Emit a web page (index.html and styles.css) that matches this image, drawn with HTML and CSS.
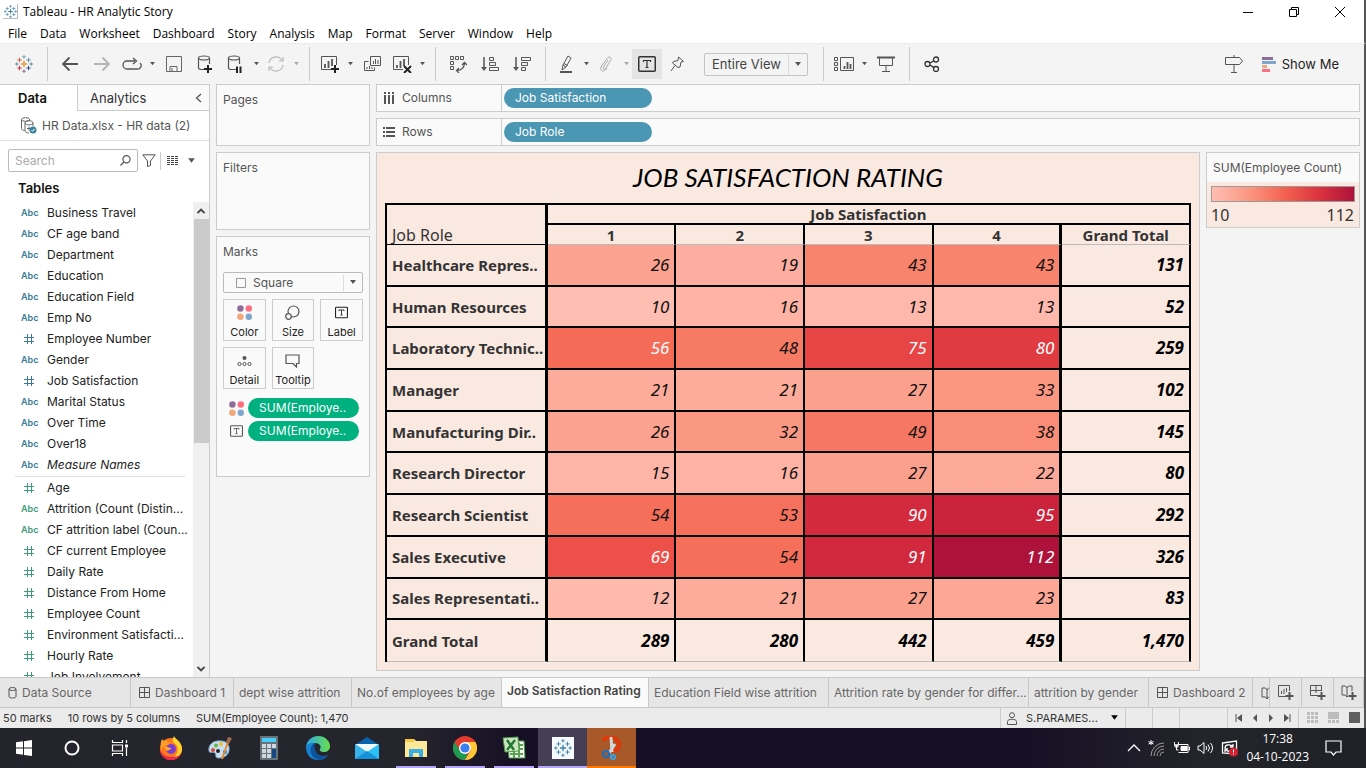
FILE: index.html
```html
<!DOCTYPE html>
<html lang="en">
<head>
<meta charset="utf-8">
<title>Tableau - HR Analytic Story</title>
<link rel="stylesheet" href="styles.css">
</head>
<body>
<svg class="defs" aria-hidden="true">
  <symbol id="plus-mark" viewBox="0 0 20 20"><path d="M10 6.5v7M6.500 10h7" stroke="#eb912c" stroke-width="1.500"/><path d="M5 3v5M2.500 5.500h5" stroke="#c8553d"/><path d="M15 3v5M12.500 5.500h5" stroke="#5c87a6"/><path d="M5 12v5M2.500 14.500h5" stroke="#c72035"/><path d="M15 12v5M12.500 14.500h5" stroke="#1f457e"/><path d="M10 0v4M8 2h4" stroke="#7099a6"/><path d="M10 16v4M8 18h4" stroke="#7b6a95"/><path d="M2 8v4M0 10h4" stroke="#5c87a6"/><path d="M18 8v4M16 10h4" stroke="#59879b"/></symbol>
  <symbol id="blue-mark" viewBox="0 0 20 20"><g stroke="#3c7fae"><path d="M10 6.500v7M6.500 10h7" stroke-width="1.500"/><path d="M5 3v5M2.500 5.500h5M15 3v5M12.500 5.500h5M5 12v5M2.500 14.500h5M15 12v5M12.500 14.500h5M10 0v4M8 2h4M10 16v4M8 18h4M2 8v4M0 10h4M18 8v4M16 10h4"/></g></symbol>
  <symbol id="caret" viewBox="0 0 8 5"><path d="M1 0h6L4 4z" fill="currentColor"/></symbol>
  <symbol id="t-box" viewBox="0 0 18 16"><rect x=".75" y=".75" width="16.500" height="14.500" rx="1" fill="none" stroke="currentColor" stroke-width="1.500"/><path d="M5.500 6V4.500h7V6M9 4.500v7M7.500 11.500h3" fill="none" stroke="currentColor" stroke-width="1.200"/></symbol>
  <symbol id="dots" viewBox="0 0 14 14"><circle cx="3.200" cy="3.200" r="3" fill="#8b6f9a"/><circle cx="11" cy="3.200" r="3" fill="#fb6f80"/><circle cx="3.200" cy="11" r="3" fill="#f3a67b"/><circle cx="11" cy="11" r="3" fill="#7fa6cf"/></symbol>
  <symbol id="window" viewBox="0 0 11 11"><path d="M.5.5h10v10H.5zM5.500.5v10M.5 5.500h10" fill="none" stroke="#555"/></symbol>
  <symbol id="book" viewBox="0 0 12 12"><path d="M6 3 4.500 1H1v9h3.500L6 12l1.500-2H11V1H7.500zM6 3v9" fill="none" stroke="#555"/></symbol>
  <symbol id="cyl" viewBox="0 0 18 18"><path d="M9.500 14.500H5c-2 0-3.500-.6-3.500-1.500V3M12.500 3v6" fill="none" stroke="#555" stroke-width="1.200"/><ellipse cx="7" cy="3" rx="5.500" ry="2" fill="none" stroke="#555" stroke-width="1.200"/></symbol>
</svg>

<header class="titlebar">
  <span class="app-icon"><svg width="13" height="13"><use href="#blue-mark"/></svg></span>
  <span>Tableau - HR Analytic Story</span>
  <div class="win-controls">
    <button aria-label="Minimize"><svg width="12" height="12"><path d="M1 6.500h10" stroke="#000"/></svg></button>
    <button aria-label="Restore"><svg width="12" height="12" fill="none" stroke="#000"><path d="M1.500 3.500h7v7h-7zM3.500 3V1.500h7v7H9"/></svg></button>
    <button aria-label="Close"><svg width="12" height="12" fill="none" stroke="#000"><path d="m1 1 10 10M11 1 1 11"/></svg></button>
  </div>
</header>
<nav class="menubar">
  <button>File</button><button>Data</button><button>Worksheet</button><button>Dashboard</button><button>Story</button><button>Analysis</button><button>Map</button><button>Format</button><button>Server</button><button>Window</button><button>Help</button>
</nav>

<div class="app">
<div class="toolbar">
  <button class="tb-logo" aria-label="Start page"><svg width="18" height="18"><use href="#plus-mark"/></svg></button>
  <i class="sep"></i>
  <button class="tb" aria-label="Undo"><svg width="18" height="16" fill="none" stroke="#555" stroke-width="1.800"><path d="M17 8H2M8.500 1.500 2 8l6.500 6.500"/></svg></button>
  <button class="tb" aria-label="Redo"><svg width="18" height="16" fill="none" stroke="#b5b5b5" stroke-width="1.800"><path d="M1 8h15M9.500 1.500 16 8l-6.500 6.500"/></svg></button>
  <button class="tb tight" aria-label="Replay"><svg width="20" height="14" fill="none" stroke="#555" stroke-width="1.300"><path d="M13 4H5a3.500 3.500 0 0 0 0 8h10a3.500 3.500 0 0 0 3-6M11 1l3.500 3-3.500 3"/></svg></button>
  <button class="tb caret" aria-label="Replay options"><svg width="7" height="4"><use href="#caret"/></svg></button>
  <button class="tb" aria-label="Save"><svg width="16" height="16" fill="none" stroke="#666"><path d="M.5.5h15v15H.5zM4 15v-4.500h7V15M6 12v3"/></svg></button>
  <button class="tb" aria-label="New data source"><svg width="18" height="18"><use href="#cyl"/><path d="M11 10v8M7 14h8" stroke="#222" stroke-width="2"/></svg></button>
  <button class="tb tight" aria-label="Pause updates"><svg width="18" height="18"><use href="#cyl"/><path d="M10 11.500V18M13.500 11.500V18" stroke="#222" stroke-width="2"/></svg></button>
  <button class="tb caret" aria-label="Pause options"><svg width="7" height="4"><use href="#caret"/></svg></button>
  <button class="tb tight" aria-label="Refresh"><svg width="18" height="16" fill="none" stroke="#bbb" stroke-width="1.200"><path d="M2 7a7 7 0 0 1 13-2.500M16 1v4h-4M16 9A7 7 0 0 1 3 11.500M2 15v-4h4"/></svg></button>
  <button class="tb caret dim" aria-label="Refresh options"><svg width="7" height="4"><use href="#caret"/></svg></button>
  <i class="sep"></i>
  <button class="tb tight" aria-label="New worksheet"><svg width="20" height="18" fill="none" stroke="#555"><path d="M11 14.500H1.500V1.500h15V10"/><path d="M5 13V9M8.500 13V6M12 11V4" stroke-width="1.800"/><path d="M15 10v8M11 14h8" stroke="#222" stroke-width="2"/></svg></button>
  <button class="tb caret" aria-label="New worksheet options"><svg width="7" height="4"><use href="#caret"/></svg></button>
  <button class="tb" aria-label="Duplicate"><svg width="18" height="18" fill="none" stroke="#555"><path d="M7.500 1.500h10v9h-10zM5.500 6.500h-4v9h10v-3M4 14v-2M6.500 14v-3M9 14v-2M10.500 9V6M12.500 9V4M15 9V5"/></svg></button>
  <button class="tb tight" aria-label="Clear sheet"><svg width="20" height="18" fill="none" stroke="#555"><path d="M11 14.500H1.500V1.500h15V10"/><path d="M5 13v-3M8.500 13V6M12 11V4" stroke-width="1.800"/><path d="m12 11 7 7M19 11l-7 7" stroke="#222" stroke-width="2"/></svg></button>
  <button class="tb caret" aria-label="Clear options"><svg width="7" height="4"><use href="#caret"/></svg></button>
  <i class="sep"></i>
  <button class="tb" aria-label="Swap rows and columns"><svg width="18" height="18" fill="none" stroke="#555"><path d="M1.500 1.500h3v3h-3zM6.500 1.500h3v3h-3zM11.500 1.500h3v3h-3zM1.500 6.500h3v3h-3zM1.500 11.500h3v3h-3z"/><path d="M8 15.500c5 0 7-3 7.500-7M13 10l2.500-2.500L18 10M10 13l-2.500 2.500L10 18" stroke-width="1.300"/></svg></button>
  <button class="tb" aria-label="Sort ascending"><svg width="18" height="16" fill="none" stroke="#555"><path d="M3 1v12" stroke-width="1.500"/><path d="M0 11h6l-3 4z" fill="#555" stroke="none"/><path d="M8.500 1.500h4v3h-4zM8.500 6.500h6v3h-6zM8.500 11.500h9v3h-9z"/></svg></button>
  <button class="tb" aria-label="Sort descending"><svg width="18" height="16" fill="none" stroke="#555"><path d="M3 1v12" stroke-width="1.500"/><path d="M0 11h6l-3 4z" fill="#555" stroke="none"/><path d="M8.500 1.500h9v3h-9zM8.500 6.500h6v3h-6zM8.500 11.500h4v3h-4z"/></svg></button>
  <i class="sep"></i>
  <button class="tb tight" aria-label="Highlight"><svg width="14" height="18" fill="none" stroke="#555"><path d="m4 10 5-9 3 2-5 9zM4 10l-1 5 4-3M5 8.500l3.500 2"/><path d="M1 17h12" stroke-width="2"/></svg></button>
  <button class="tb caret" aria-label="Highlight options"><svg width="7" height="4"><use href="#caret"/></svg></button>
  <button class="tb tight" aria-label="Group"><svg width="14" height="16" fill="none" stroke="#aaa"><path d="m9 4-4.500 7c-1 2 1 3 2 1.500l5-8c2-3-1.500-5-3.500-2L2.500 10C1 13 2 15 4 15s3-1.500 4-3"/></svg></button>
  <button class="tb caret dim" aria-label="Group options"><svg width="7" height="4"><use href="#caret"/></svg></button>
  <button class="tb text-on" aria-label="Show mark labels" aria-pressed="true"><svg width="18" height="16"><use href="#t-box"/></svg></button>
  <button class="tb mid" aria-label="Fix axes"><svg width="16" height="16" fill="none" stroke="#555"><path d="m9.500 1 5 4.500-2.500.5-1 5-2 .5L3.500 7l1-1.500L9 4.500zM6 9.500 2 15"/></svg></button>
  <div class="fit"><select aria-label="Fit"><option>Entire View</option></select><svg width="8" height="5"><use href="#caret"/></svg></div>
  <i class="sep"></i>
  <button class="tb tight" aria-label="Show cards"><svg width="20" height="16" fill="none" stroke="#555"><path d="M.5 1.500h3v3h-3zM.5 6.500h3v3h-3zM.5 11.500h3v3h-3zM6.500 1.500h13v13h-13z"/><path d="M10.500 13v-3M13.500 13V6M16.500 13V8" stroke-width="1.800"/></svg></button>
  <button class="tb caret" aria-label="Card options"><svg width="7" height="4"><use href="#caret"/></svg></button>
  <button class="tb" aria-label="Presentation mode"><svg width="18" height="16" fill="none" stroke="#555"><path d="M0 1.500h18" stroke-width="2"/><path d="M2.500 2v7.500h13V2M9 10v5M5 15.500h8"/></svg></button>
  <i class="sep"></i>
  <button class="tb" aria-label="Share"><svg width="16" height="16" fill="none" stroke="#333" stroke-width="1.300"><circle cx="3.500" cy="8" r="2.500"/><circle cx="12" cy="3.500" r="2.500"/><circle cx="12" cy="13" r="2.500"/><path d="m6 7 4-2.300M6 9l4 2.600"/></svg></button>
  <button class="tb signpost" aria-label="Guide"><svg width="20" height="18" fill="none" stroke="#555"><path d="M1.500 2.500h14l3 3.500-3 3.500h-14zM10 0v2.500M10 9.500v8M7 17.500h6"/></svg></button>
  <button class="showme"><svg width="14" height="15"><path d="M0 0h11v3H0z" fill="#8b6f9a"/><path d="M0 4h14v3H0z" fill="#7fa6cf"/><path d="M0 8h5v3H0z" fill="#f3a67b"/><path d="M0 12h8v3H0z" fill="#fb6f80"/></svg>Show Me</button>
</div>

<div class="workspace">
  <aside class="data-pane">
    <div class="pane-tabs"><button class="on">Data</button><button>Analytics<svg width="7" height="10" fill="none" stroke="#555" stroke-width="1.300"><path d="M6 1 1.500 5 6 9"/></svg></button></div>
    <div class="source"><svg width="17" height="17" fill="none" stroke="#666"><path d="M1.500 2.500v9c0 1 1 2 3 2M9.500 2V4"/><ellipse cx="5.500" cy="2.500" rx="4" ry="1.800"/><path d="M5 6v8c0 1 2 2 4 2M5 6c0-3 8-3 8 0v3M5 6c0 2.500 8 2.500 8 0"/><path d="M7 11.500h4M9 9.500v4"/><circle cx="13" cy="13" r="3.500" fill="#3b829e" stroke="none"/><path d="m11.500 13 1.200 1.200 2-2.400" stroke="#fff"/></svg>HR Data.xlsx - HR data (2)</div>
    <div class="search-row">
      <div class="search"><input type="text" placeholder="Search" aria-label="Search"><svg width="11" height="11" fill="none" stroke="#555" stroke-width="1.200"><circle cx="6.500" cy="4.200" r="3.600"/><path d="M4 7 .5 10.500"/></svg></div>
      <button aria-label="Filter fields"><svg width="14" height="13" fill="none" stroke="#555"><path d="M.8.8h12.400L8.500 7v4.500l-3 1V7z"/></svg></button>
      <i></i>
      <button aria-label="View"><svg width="12" height="10" stroke="#444" stroke-dasharray="3 1"><path d="M0 .5h12M0 2.500h12M0 4.500h12M0 6.500h12M0 8.500h12"/></svg></button>
      <button aria-label="View options"><svg width="9" height="6"><use href="#caret"/></svg></button>
    </div>
    <h2>Tables</h2>
    <div class="fields">
      <ul>
        <li><b>Abc</b>Business Travel</li><li><b>Abc</b>CF age band</li><li><b>Abc</b>Department</li><li><b>Abc</b>Education</li><li><b>Abc</b>Education Field</li><li><b>Abc</b>Emp No</li><li><b class="num"></b>Employee Number</li><li><b>Abc</b>Gender</li><li><b class="num"></b>Job Satisfaction</li><li><b>Abc</b>Marital Status</li><li><b>Abc</b>Over Time</li><li><b>Abc</b>Over18</li><li><b>Abc</b><em>Measure Names</em></li>
      </ul>
      <ul class="measures">
        <li><b class="num"></b>Age</li><li><b>Abc</b>Attrition (Count (Distin...</li><li><b>Abc</b>CF attrition label (Coun...</li><li><b class="num"></b>CF current Employee</li><li><b class="num"></b>Daily Rate</li><li><b class="num"></b>Distance From Home</li><li><b class="num"></b>Employee Count</li><li><b class="num"></b>Environment Satisfacti...</li><li><b class="num"></b>Hourly Rate</li><li><b class="num"></b>Job Involvement</li>
      </ul>
      <div class="scroll"><svg width="8" height="6" fill="none" stroke="#444" stroke-width="1.800"><path d="M.5 5 4 1.500 7.500 5"/></svg><i></i><svg width="8" height="6" fill="none" stroke="#444" stroke-width="1.800"><path d="M.5 1 4 4.500 7.500 1"/></svg></div>
    </div>
  </aside>

  <section class="cards">
    <div class="card pages">Pages</div>
    <div class="card filters">Filters</div>
    <div class="card marks">
      Marks
      <div class="mark-type"><svg width="10" height="10" fill="none" stroke="#999"><path d="M.5.500h9v9h-9z"/></svg><select aria-label="Mark type"><option>Square</option></select><svg class="arrow" width="8" height="5"><use href="#caret"/></svg></div>
      <div class="shelf">
        <button><svg width="15" height="15"><use href="#dots"/></svg>Color</button>
        <button><svg width="15" height="15" fill="none" stroke="#555" stroke-width="1.200"><circle cx="8.500" cy="6.500" r="5.500"/><circle cx="3.500" cy="11.500" r="2.800" fill="#fafafa"/></svg>Size</button>
        <button><svg width="13" height="15"><use href="#t-box"/></svg>Label</button>
        <button><svg width="15" height="15" fill="none" stroke="#555"><circle cx="7.500" cy="5" r="2" fill="#555" stroke="none"/><circle cx="2.500" cy="11" r="1.600"/><circle cx="7.500" cy="11" r="1.600"/><circle cx="12.500" cy="11" r="1.600"/></svg>Detail</button>
        <button><svg width="15" height="15" fill="none" stroke="#555" stroke-width="1.200"><path d="M1 2h13v8.500h-2.500v3.500L8 10.500H1z"/></svg>Tooltip</button>
      </div>
      <div class="assigned"><svg width="15" height="15"><use href="#dots"/></svg><button class="pill green">SUM(Employe..</button></div>
      <div class="assigned"><svg width="13" height="12"><use href="#t-box"/></svg><button class="pill green">SUM(Employe..</button></div>
    </div>
  </section>

  <main class="content">
    <div class="axis"><span><svg width="12" height="12" stroke="#555" stroke-width="2"><path d="M2 3v9M6 3v9M10 3v9M2 0v2M6 0v2M10 0v2"/></svg>Columns</span><button class="pill">Job Satisfaction</button></div>
    <div class="axis"><span><svg width="12" height="12" stroke="#555" stroke-width="2"><path d="M3 2h9M3 6h9M3 10h9M0 2h2M0 6h2M0 10h2"/></svg>Rows</span><button class="pill">Job Role</button></div>
    <div class="view-row">
      <section class="sheet">
        <h1>JOB SATISFACTION RATING</h1>
        <div class="grid">
        <table>
          <colgroup><col class="role-col"><col><col><col><col><col></colgroup>
          <thead>
            <tr><th rowspan="2" class="corner">Job Role</th><th colspan="5" class="top">Job Satisfaction</th></tr>
            <tr class="sub"><th>1</th><th>2</th><th>3</th><th>4</th><th>Grand Total</th></tr>
          </thead>
          <tbody>
            <tr><th>Healthcare Repres..</th><td style="background:#fca290">26</td><td style="background:#fdaea0">19</td><td style="background:#f9846d">43</td><td style="background:#f9846d">43</td><td>131</td></tr>
            <tr><th>Human Resources</th><td style="background:#ffbeb2">10</td><td style="background:#feb3a5">16</td><td style="background:#ffb8ab">13</td><td style="background:#ffb8ab">13</td><td>52</td></tr>
            <tr><th>Laboratory Technic..</th><td class="lt" style="background:#f46b58">56</td><td style="background:#f77a65">48</td><td class="lt" style="background:#e64445">75</td><td class="lt" style="background:#e13b42">80</td><td>259</td></tr>
            <tr><th>Manager</th><td style="background:#fdab9b">21</td><td style="background:#fdab9b">21</td><td style="background:#fca08e">27</td><td style="background:#fb9681">33</td><td>102</td></tr>
            <tr><th>Manufacturing Dir..</th><td style="background:#fca290">26</td><td style="background:#fb9883">32</td><td style="background:#f67864">49</td><td style="background:#fa8d77">38</td><td>145</td></tr>
            <tr><th>Research Director</th><td style="background:#feb5a7">15</td><td style="background:#feb3a5">16</td><td style="background:#fca08e">27</td><td style="background:#fda999">22</td><td>80</td></tr>
            <tr><th>Research Scientist</th><td style="background:#f56f5b">54</td><td style="background:#f5715d">53</td><td class="lt" style="background:#d42a3d">90</td><td class="lt" style="background:#cc233c">95</td><td>292</td></tr>
            <tr><th>Sales Executive</th><td class="lt" style="background:#ec5049">69</td><td style="background:#f56f5b">54</td><td class="lt" style="background:#d2283d">91</td><td class="lt" style="background:#ae123a">112</td><td>326</td></tr>
            <tr><th>Sales Representati..</th><td style="background:#ffbaae">12</td><td style="background:#fdab9b">21</td><td style="background:#fca08e">27</td><td style="background:#fda797">23</td><td>83</td></tr>
            <tr class="total"><th>Grand Total</th><td>289</td><td>280</td><td>442</td><td>459</td><td>1,470</td></tr>
          </tbody>
        </table>
        </div>
      </section>
      <aside class="legend"><h3>SUM(Employee Count)</h3><div class="ramp"></div><div class="ends"><span>10</span><span>112</span></div></aside>
    </div>
  </main>
</div>

<nav class="sheet-tabs">
  <button><svg width="9" height="12" fill="none" stroke="#555"><ellipse cx="4.500" cy="2" rx="3.500" ry="1.500"/><path d="M1 2v7.500c0 2 7 2 7 0V2"/></svg>Data Source</button>
  <button><svg width="11" height="11"><use href="#window"/></svg>Dashboard 1</button>
  <button>dept wise attrition</button>
  <button>No.of employees by age</button>
  <button class="on">Job Satisfaction Rating</button>
  <button>Education Field wise attrition</button>
  <button>Attrition rate by gender for differ...</button>
  <button>attrition by gender</button>
  <button><svg width="11" height="11"><use href="#window"/></svg>Dashboard 2</button>
  <button aria-label="Story"><svg width="12" height="12"><use href="#book"/></svg></button>
  <button class="new" aria-label="New worksheet"><svg width="16" height="15" fill="none" stroke="#555"><path d="M8 11.500H.5V.5h11V6M3.500 9V6M6 9V4M8.500 7V3"/><path d="M11.500 7v8M7.500 11h8" stroke-width="2"/></svg></button>
  <button class="new" aria-label="New dashboard"><svg width="16" height="15" fill="none" stroke="#555"><path d="M8 10.500H.5V.5h11V6M6 .5V8M.5 5.500h11"/><path d="M11.500 7v8M7.500 11h8" stroke-width="2"/></svg></button>
  <button class="new" aria-label="New story"><svg width="16" height="15" fill="none" stroke="#555"><path d="M6 3 4.500 1H1v9h3l2 2 1-1M6 3v9M6 3l1.500-2H11v5"/><path d="M11.500 7v8M7.500 11h8" stroke-width="2"/></svg></button>
</nav>
<footer class="status">
  <span>50 marks</span><span>10 rows by 5 columns</span><span>SUM(Employee Count): 1,470</span>
  <button class="user"><svg width="10" height="13" fill="none" stroke="#555"><circle cx="5" cy="3.200" r="2.500"/><path d="M.5 12.500V9.500c0-3 9-3 9 0v3z"/></svg>S.PARAMES...<svg width="9" height="6"><use href="#caret"/></svg></button>
  <i></i><i></i><i class="wide"></i>
  <div class="pager"><button aria-label="First"><svg width="8" height="8"><path d="M1 0v8M2 0" stroke="#555"/><path d="M7 0v8L2 4z" fill="#555"/></svg></button><button aria-label="Previous"><svg width="8" height="8"><path d="M6 0v8L2 4z" fill="#555"/></svg></button><button aria-label="Next"><svg width="8" height="8"><path d="M2 0v8l4-4z" fill="#555"/></svg></button><button aria-label="Last"><svg width="8" height="8"><path d="M7 0v8" stroke="#555"/><path d="M1 0v8l5-4z" fill="#555"/></svg></button></div>
  <div class="views"><button aria-label="Sheet sorter"><svg width="12" height="12" fill="#bdbdbd"><path d="M0 0h3v3H0zM4 0h3v3H4zM8 0h3v3H8zM0 4h3v3H0zM4 4h3v3H4zM8 4h3v3H8zM0 8h3v3H0zM4 8h3v3H4zM8 8h3v3H8z"/></svg></button><button aria-label="Filmstrip"><svg width="12" height="12" fill="#bdbdbd"><path d="M0 0h11v7H0zM0 8h3v3H0zM4 8h3v3H4zM8 8h3v3H8z"/></svg></button><button aria-label="Tabs"><svg width="12" height="12"><path d="M0 0h11v11H0z" fill="#5f5f5f"/></svg></button></div>
</footer>
</div>

<div class="taskbar">
  <button class="sys" aria-label="Start"><svg width="16" height="16" fill="#fff"><path d="m0 2.300 7-1v6.300H0zM8 1.200 16 0v7.600H8zM0 8.500h7v6.300l-7-1zM8 8.500h8V16l-8-1.100z"/></svg></button>
  <button class="sys" aria-label="Search"><svg width="16" height="16" fill="none" stroke="#fff" stroke-width="2"><circle cx="8" cy="8" r="6.500"/></svg></button>
  <button class="sys" aria-label="Task view"><svg width="18" height="16" fill="none" stroke="#fff" stroke-width="1.200"><path d="M1.500 0v2.500h10V0M1.500 5h10v6h-10zM1.500 16v-2.500h10V16M15.500 0v3M15.500 8v8"/><path d="M14 4.500h3v3h-3z" fill="#fff" stroke="none"/></svg></button>
  <button aria-label="Firefox"><svg width="24" height="24"><circle cx="12" cy="13" r="11" fill="#ff7a1c"/><path d="M12 24C5 24 1 19 1 13c2 6 6 8 11 8s9-3 11-10c1 8-4 13-11 13z" fill="#f5264d"/><path d="M15 0c1 3 8 6 8 13 0 5-4 8-8 8 5-4 5-11 0-14-2-2-1-5 0-7z" fill="#ffd52e"/><path d="M3 3c1 2 3 2 5 2l3 3-5 2-4 3C1 8 2 5 3 3z" fill="#ff9d27"/><circle cx="12" cy="13" r="5" fill="#7a3fd0"/><path d="M5 11c4-1 5 1 7 1 0 2-3 2-4 3z" fill="#ffab25"/></svg></button>
  <button aria-label="Paint"><svg width="24" height="24"><path d="M13 5C5 4 0 9 1 15c1 3 4 0 6 2s-1 5 4 5c7 0 11-5 10-11-1-4-4-6-8-6z" fill="#c9dff0" stroke="#7fa7c5"/><circle cx="5" cy="14" r="2" fill="#d94a36"/><circle cx="8" cy="9.500" r="2" fill="#62b546"/><circle cx="13" cy="8" r="2" fill="#f1bf2f"/><circle cx="17" cy="16" r="2.200" fill="#3692d8"/><circle cx="10" cy="15" r="2" fill="#23232c"/><path d="m20 6-6 17" stroke="#e58b2f" stroke-width="2"/><path d="m18 6 2-5 4 1-3 6z" fill="#9b6b4d"/></svg></button>
  <button aria-label="Calculator"><svg width="18" height="24"><rect width="18" height="24" rx="1" fill="#67737c"/><path d="M2 2h14v4H2z" fill="#47cdf8"/><path d="M2 8h4v4H2zM7 8h4v4H7zM12 8h4v4h-4zM2 13h4v4H2zM7 13h4v4H7zM2 18h4v4H2zM7 18h4v4H7z" fill="#d0d8de"/><path d="M12 13h4v9h-4z" fill="#174780"/></svg></button>
  <button aria-label="Edge"><svg width="24" height="24"><defs><linearGradient id="eg"><stop offset="0" stop-color="#2aa8ea"/><stop offset="1" stop-color="#6be04c"/></linearGradient></defs><path d="M0 11C1 4 6 0 12 0c7 0 12 5 12 10 0 4-3 6-6 6-3 0-5-1-4-3 2-3-1-6-5-6S2 8 0 11z" fill="url(#eg)"/><path d="M0 11c2-4 6-4 9-4-4 2-4 8-1 11 3 4 9 4 14 1-6 9-22 6-22-8z" fill="#1683d5"/><path d="M9 7c-7 3-6 14 3 17 5 0 8-2 10-5-8 3-15-2-13-12z" fill="#0d539e"/></svg></button>
  <button aria-label="Mail"><svg width="24" height="24"><path d="M0 9 12 1l12 8H0z" fill="#0863ad"/><path d="M1 8h22v10H1z" fill="#f1f7fb"/><path d="m0 8 12 8L24 8v15H0z" fill="#2cc0f4"/><path d="m0 8 12 8-12 7z" fill="#39b4eb"/><path d="m0 23 12-8 12 8z" fill="#1592da"/></svg></button>
  <button class="open" aria-label="File Explorer"><svg width="24" height="22"><path d="M1 2h9l2 2h11v16H1z" fill="#ffe79a"/><path d="M1 2h9v3H1z" fill="#f7c945"/><path d="M5 12h14v8h-4v-4H9v4H5z" fill="#38aee5"/></svg></button>
  <button class="open" aria-label="Chrome"><svg width="24" height="24"><circle cx="12" cy="12" r="12" fill="#e33b2e"/><path d="M12 24A12 12 0 0 1 1.600 6l6 10 7 2.500z" fill="#1e9b52"/><path d="M12 24a12 12 0 0 0 10.400-18H12l6 8z" fill="#fcc934"/><circle cx="12" cy="12" r="6" fill="#fff"/><circle cx="12" cy="12" r="4.600" fill="#3a7ff0"/></svg></button>
  <button class="open" aria-label="Excel"><svg width="24" height="24"><path d="M6 5h16l1 17H7z" fill="#f7fbf5" stroke="#4c9b45"/><path d="M14 9h7M14 13h7M8 18h13M12 15v7M17 7v14" stroke="#56a34d" stroke-width="2"/><path d="m1 2 15-1 1 14-14 1z" fill="#cfe6c3" stroke="#4c9b45"/><path d="m5 4 7 10M13 4 5 14" stroke="#237a30" stroke-width="2.500"/></svg></button>
  <button class="open tableau" aria-label="Tableau"><svg width="22" height="22"><path d="M0 0h22v22H0z" fill="#f8fbfd"/><use href="#blue-mark" x="2" y="2" width="18" height="18"/></svg></button>
  <button class="open snip" aria-label="Snip"><svg width="22" height="24" fill="none"><path d="M2 4c7-5 16-2 16 5 0 4-3 6-7 6" stroke="#df3909" stroke-width="4"/><path d="m10 1 1 15M14 8l-6 9" stroke="#d3d6dc" stroke-width="3"/><circle cx="5" cy="18" r="3" stroke="#176fc1" stroke-width="2"/><circle cx="12" cy="21" r="2" stroke="#2ba9ef" stroke-width="2"/></svg></button>
  <div class="tray">
    <svg width="14" height="8" fill="none" stroke="#fff" stroke-width="1.300"><path d="m1 7 6-6 6 6"/></svg>
    <svg width="18" height="18" fill="none" stroke="#999"><path d="M3 17A13 13 0 0 1 16 4M6 17A10 10 0 0 1 16 7M9 17a7 7 0 0 1 7-7M12 17a4 4 0 0 1 4-4"/><path d="M3 1v5M.5 2.500l5 2.500M5.500 2.500 .5 5" stroke="#fff"/></svg>
    <svg width="17" height="14" fill="none" stroke="#fff"><path d="M6 3.500h9v8H5.500M15.500 6h1v3h-1"/><path d="M8 5.500h6v4H8z" fill="#fff"/><path d="M1.500 1v3h4V1M3.500 4v5M2 4h3v2H2zM3.500 9h2"/></svg>
    <svg width="17" height="14" fill="none" stroke="#fff"><path d="M1 5v4h2l4 3.500v-11L3 5zM9 5q1.500 2 0 4M11 3.500q3 3.500 0 7M13.500 2q4 5 0 10"/></svg>
    <svg width="18" height="17" fill="none" stroke="#fff"><path d="m1.500 3 14-2v13l-14-1zM4 8c0-4 6-4 8-1M12 4v3H9M4 12V9h3M5 10c2 2 4 1 5 0" stroke-width="1.300"/><circle cx="12.500" cy="12" r="4.500" fill="#d81f2e" stroke="none"/><path d="M12.500 9.500v3M12.500 13.500v1"/></svg>
    <div class="clock"><span>17:38</span><span>04-10-2023</span></div>
    <svg width="17" height="16" fill="none" stroke="#fff" stroke-width="1.200"><path d="M1 1h15v11h-5l-2.500 3L6 12H1z"/></svg>
  </div>
</div>
</body>
</html>
```

FILE: styles.css
```css
* { box-sizing: border-box; }
body {
  margin: 0; height: 100vh; display: flex; flex-direction: column; overflow: hidden;
  font-family: Inter, "Liberation Sans", sans-serif; font-size: 12px; line-height: 16px; color: #333; background: #fff;
}
button { margin: 0; padding: 0; border: 0; background: none; font: inherit; color: inherit; display: flex; align-items: center; }
svg { flex: none; display: block; }
ul, h1, h2, h3 { margin: 0; padding: 0; }
.defs { position: absolute; width: 0; height: 0; }

.titlebar, .menubar, .clock { font-family: "Open Sans", "Noto Sans", sans-serif; color: #000; }
.titlebar, .menubar, .app { border-right: 2px solid #555; }
.titlebar { display: flex; align-items: center; height: 23px; flex: none; padding: 0 1px 0 3px; gap: 5px; }
.app-icon { width: 15px; height: 15px; display: flex; align-items: center; justify-content: center; border-right: 1px solid #bbb; border-bottom: 1px solid #bbb; }
.win-controls { margin-left: auto; display: flex; }
.win-controls button { width: 46px; height: 22px; justify-content: center; }
.menubar { display: flex; height: 20px; flex: none; padding: 2px 0 0 8px; gap: 13px; }

.app { flex: 1; min-height: 0; display: flex; flex-direction: column; background: #f4f4f4; border-top: 1px solid #ececec; }

.toolbar { display: flex; align-items: center; height: 40px; flex: none; color: #555; }
.tb-logo { width: 40px; padding-left: 7px; justify-content: center; }
.sep { width: 1px; height: 34px; background: #ccc; margin: 0 6px 0 7px; flex: none; }
.tb { width: 32px; height: 30px; justify-content: center; flex: none; }
.tb.tight { width: 28px; }
.tb.mid, .tb.text-on { width: 30px; }
.tb.caret { width: 12px; }
.tb.dim { color: #aaa; }
.tb.text-on { background: #e4e4e4; color: #333; }
.fit { display: flex; align-items: center; width: 104px; height: 23px; margin: 0 8px 0 12px; border: 1px solid #c4c4c4; border-radius: 2px; flex: none; }
.fit select { appearance: none; width: 84px; height: 21px; padding: 0 0 0 7px; border: 0; border-right: 1px solid #ddd; background: none; font: inherit; font-size: 13px; color: #444; }
.fit svg { margin: 0 auto; }
.signpost { margin-left: auto; }
.showme { gap: 6px; margin: 0 25px 0 12px; font-size: 13px; color: #222; }

.workspace { flex: 1; min-height: 0; display: flex; gap: 6px; }
.data-pane { width: 210px; flex: none; display: flex; flex-direction: column; background: #fff; border-top: 1px solid #ccc; border-right: 1px solid #ccc; overflow: hidden; }
.pane-tabs { display: flex; height: 26px; flex: none; font-size: 13px; }
.pane-tabs button { flex: 1; padding: 0 7px 0 12px; justify-content: space-between; border-left: 1px solid #ccc; border-bottom: 1px solid #ccc; background: #fafafa; }
.pane-tabs .on { flex: none; width: 77px; padding-left: 18px; border: 0; background: #fff; font-weight: 600; color: #111; }
.source { display: flex; align-items: center; gap: 5px; height: 30px; flex: none; padding-left: 20px; border-bottom: 1px solid #ddd; color: #555; }
.search-row { display: flex; align-items: center; gap: 4px; padding: 8px; flex: none; color: #555; }
.search { display: flex; align-items: center; width: 130px; height: 23px; padding: 0 6px; border: 1px solid #bbb; border-radius: 2px; }
.search input { flex: 1; min-width: 0; padding: 0; border: 0; outline: 0; font: inherit; }
.search input::placeholder { color: #aaa; opacity: 1; }
.search-row > i { width: 1px; height: 18px; background: #ccc; }
.search-row button:nth-of-type(2) { margin: 0 4px 0 2px; }
.data-pane h2 { height: 22px; flex: none; padding-left: 18px; font-size: 13px; line-height: 17px; font-weight: 600; color: #111; }
.fields { flex: 1; min-height: 0; position: relative; overflow: hidden; }
.fields ul { list-style: none; }
.fields li { display: flex; align-items: center; height: 21px; color: #222; white-space: nowrap; }
.fields b { width: 17px; margin: 0 9px 0 21px; font-size: 9px; font-weight: 600; color: #3b7c96; }
.fields b.num::before { content: ""; display: block; width: 10px; height: 10px; margin-left: 3px;
  background: linear-gradient(currentColor, currentColor) 3px 0 / 1px 10px no-repeat, linear-gradient(currentColor, currentColor) 7px 0 / 1px 10px no-repeat, linear-gradient(currentColor, currentColor) 0 3px / 10px 1px no-repeat, linear-gradient(currentColor, currentColor) 0 7px / 10px 1px no-repeat; }
.fields .measures { margin: 1px 0 0; }
.measures::before { content: ""; display: block; height: 1px; margin: 0 24px 0 15px; background: #ddd; }
.fields .measures b { color: #3f9c78; }
.scroll { position: absolute; right: 0; top: 0; bottom: 0; width: 16px; padding: 6px 0 5px; display: flex; flex-direction: column; align-items: center; justify-content: space-between; background: #f0f0f0; }
.scroll i { width: 15px; height: 224px; margin: 5px 0 auto; background: #cbcbcb; }

.cards { width: 154px; flex: none; display: flex; flex-direction: column; gap: 6px; color: #555; }
.card { padding: 7px 6px; border: 1px solid #ccc; background: #fafafa; }
.pages { height: 62px; }
.filters { height: 78px; }
.marks { height: 241px; }
.mark-type { display: flex; align-items: center; height: 21px; margin: 12px 0 6px; padding-left: 12px; border: 1px solid #bbb; border-radius: 2px; }
.mark-type select { appearance: none; flex: 1; padding: 0 0 0 7px; border: 0; border-right: 1px solid #ddd; background: none; font: inherit; color: #555; }
.mark-type .arrow { margin: 0 5px; }
.shelf { display: grid; grid-template-columns: repeat(3, 1fr); gap: 6px; margin-bottom: 9px; font-size: 11px; color: #222; }
.shelf button { height: 42px; padding: 5px 0 0; flex-direction: column; gap: 5px; border: 1px solid #ccc; line-height: 14px; }
.assigned { display: grid; grid-template-columns: 13px 1fr; justify-items: center; align-items: center; gap: 5px; height: 20px; margin: 0 4px 3px 7px; }
.pill { width: 148px; height: 20px; padding: 0 11px; border-radius: 10px; background: #4a96b3; color: #fff; white-space: nowrap; }
.pill.green { width: 100%; background: #00b180; }

.content { flex: 1; min-width: 0; display: flex; flex-direction: column; gap: 6px; padding: 0 4px 6px 0; }
.axis { display: flex; align-items: center; height: 28px; flex: none; border: 1px solid #ccc; background: #fafafa; color: #555; }
.axis span { width: 125px; height: 26px; margin-right: 2px; padding-left: 6px; display: flex; align-items: center; gap: 7px; border-right: 1px solid #ccc; }
.view-row { flex: 1; min-height: 0; display: flex; align-items: flex-start; gap: 6px; }
.sheet { flex: 1; height: 100%; display: flex; flex-direction: column; padding: 0 8px; border: 1px solid #ccc; background: #fae9e1; }
.sheet h1 { height: 50px; flex: none; font-family: Lato, sans-serif; font-size: 26px; line-height: 48px; font-weight: 400; font-style: italic; text-align: center; color: #000; }
.grid { flex: 1; min-height: 0; padding-bottom: 8px; }
table { width: 100%; height: 100%; table-layout: fixed; border-collapse: separate; border-spacing: 0; border: 2px solid #000; border-width: 2px 0 0 2px; font-family: "Noto Sans", sans-serif; font-size: 15px; line-height: 18px; }
.role-col { width: 20%; }
th, td { padding: 0 5px; border: 0 solid #000; border-width: 0 2px 2px 0; white-space: nowrap; overflow: hidden; }
th { font-weight: 700; color: #333; }
thead th { height: 20px; padding: 0; text-align: center; }
.sub th { border-bottom: 1px solid #bbb; }
thead .corner { padding-left: 5px; font-size: 16px; font-weight: 400; text-align: left; vertical-align: bottom; border-right-width: 3px; border-bottom: 1px solid #000; }
tbody th { padding-right: 0; text-align: left; border-right-width: 3px; }
tbody tr { height: 10%; }
td { text-align: right; font-size: 17px; font-style: italic; color: #111; }
td.lt { color: #fff; }
td:last-child, .total td { font-weight: 700; color: #000; }
tr > td:nth-child(5), .sub th:nth-child(4) { border-right-width: 3px; }
.total th, .total td { border-bottom: 1px solid #bbb; }
.legend { width: 154px; flex: none; border: 1px solid #ccc; background: #fae9e1; }
.legend h3 { height: 29px; padding-left: 6px; background: #fafafa; font-size: 12px; line-height: 30px; font-weight: 400; color: #555; }
.ramp { height: 16px; margin: 4px; border: 1px solid #999; background: linear-gradient(90deg, #ffbeb2, #fb9984 25%, #f3604f 52%, #da323f 76%, #ae123a); }
.ends { display: flex; justify-content: space-between; padding: 0 5px 3px 4px; font-size: 16px; line-height: 18px; font-family: "Noto Sans", sans-serif; }

.sheet-tabs { display: grid; grid-template-columns: 131px 103px 118px 150px 147px 180px 200px 120px 104px 17px 32px 32px 1fr; height: 31px; flex: none; border-top: 1px solid #c8c8c8; border-bottom: 1px solid #c8c8c8; background: #e6e6e6; color: #666; }
.sheet-tabs button { gap: 5px; padding-left: 5px; border-right: 1px solid #c8c8c8; white-space: nowrap; overflow: hidden; }
.sheet-tabs button:has(svg) { padding-left: 8px; }
.sheet-tabs .on { padding-bottom: 3px; background: #fafafa; font-weight: 600; color: #444; }
.sheet-tabs button.new { justify-content: center; padding: 0; }
.status { display: flex; align-items: center; height: 20px; flex: none; padding-left: 3px; background: #ebebeb; font-size: 11px; }
.status > span { margin-right: 16px; }
.status > * { flex: none; }
.user { width: 126px; height: 20px; margin-left: auto; padding: 0 6px; gap: 9px; border-left: 1px solid #ccc; border-right: 1px solid #ccc; }
.user svg:last-child { margin-left: auto; color: #000; }
.status i { width: 27px; height: 20px; border-right: 1px solid #ccc; }
.status i.wide { width: 48px; }
.pager { display: flex; width: 71px; height: 20px; padding: 0 7px; justify-content: space-between; border-right: 1px solid #ccc; }
.views { display: flex; width: 65px; padding: 0 3px 0 8px; justify-content: space-between; }

.taskbar { display: flex; height: 40px; flex: none; background: linear-gradient(90deg, #24242c, #25252d 30%, #170f25 38%, #170f25 75%, #23252a 88%, #202126); }
.taskbar button { width: 49px; height: 40px; justify-content: center; }
.taskbar button.sys { width: 48px; }
.taskbar button.sys + button:not(.sys) { margin-left: 2px; }
.taskbar .open { background: linear-gradient(#b4a7f5, #b4a7f5) center bottom / 40px 2px no-repeat; }
.taskbar .tableau { background: linear-gradient(#b4a7f5, #b4a7f5) center bottom / 49px 2px no-repeat #453f55; }
.taskbar .snip { background: linear-gradient(#ff7a00, #ff7a00) center bottom / 49px 2px no-repeat #a7592a; }
.tray { display: flex; align-items: center; gap: 7px; margin-left: auto; padding-right: 24px; }
.clock { display: flex; flex-direction: column; align-items: center; margin: 0 9px 0 0; line-height: 18px; color: #fff; }
```
